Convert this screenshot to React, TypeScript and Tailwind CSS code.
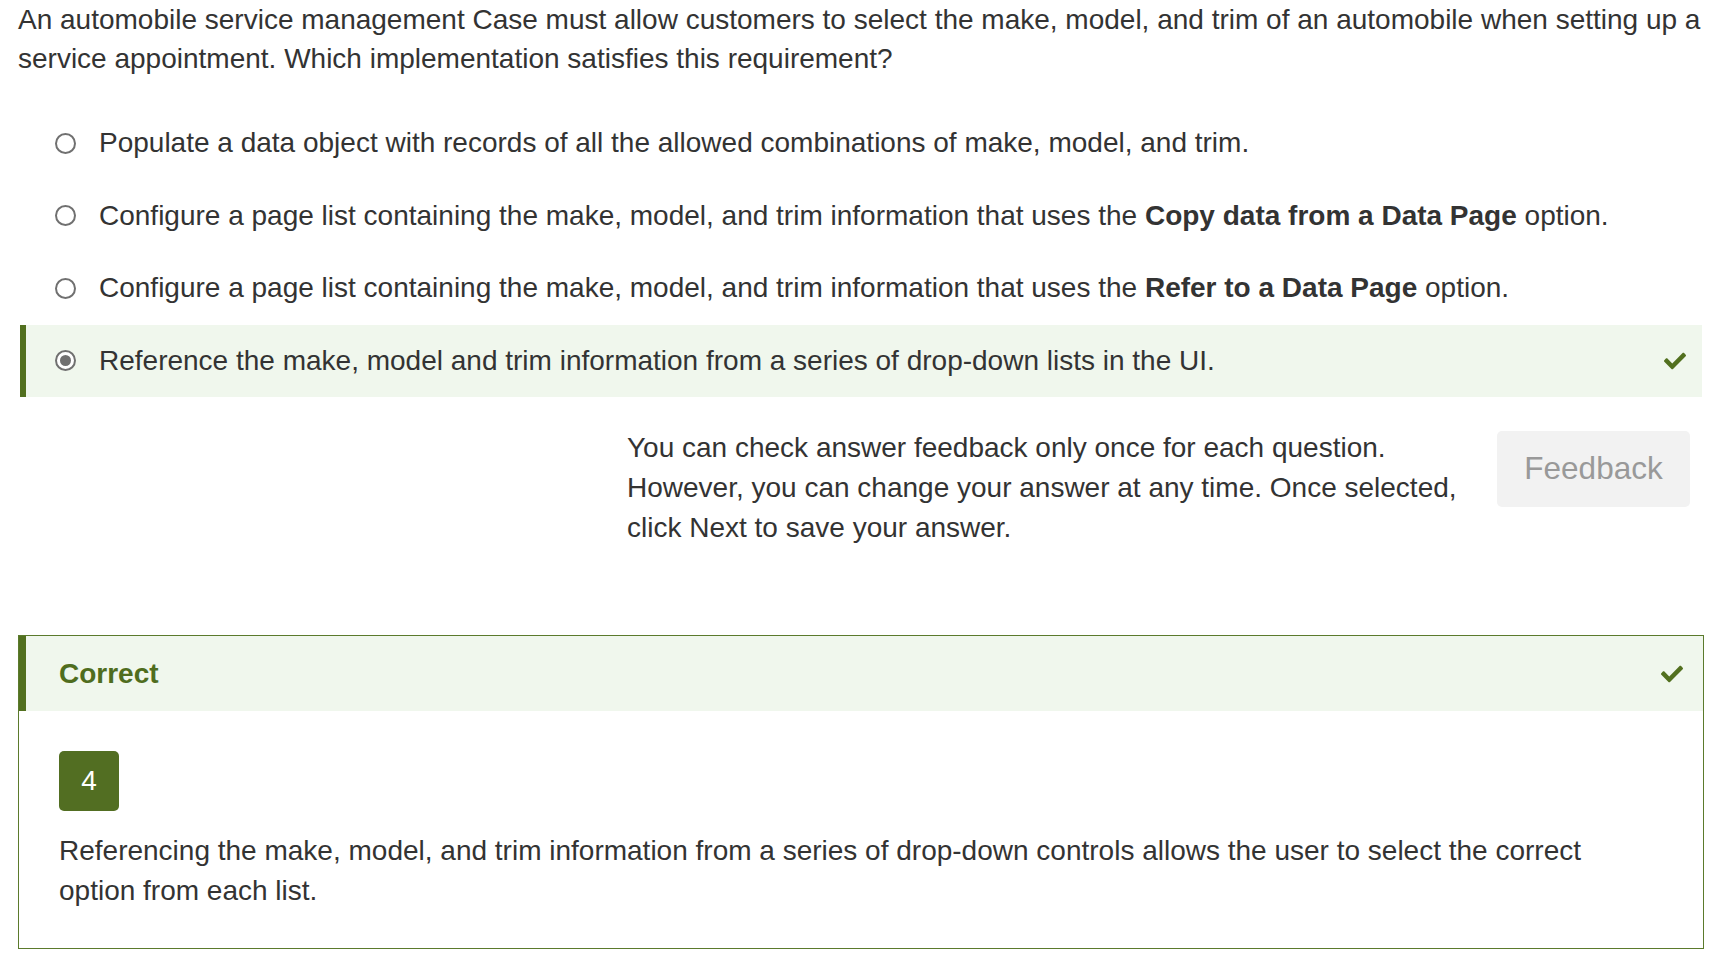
import React from "react";

function Check({ className }: { className?: string }) {
  return (
    <svg viewBox="0 0 512 512" className={className} fill="currentColor" aria-hidden="true">
      <path d="M173.898 439.404l-166.4-166.4c-9.997-9.997-9.997-26.206 0-36.204l36.203-36.204c9.997-9.998 26.207-9.998 36.204 0L192 312.69 432.095 72.596c9.997-9.997 26.207-9.997 36.204 0l36.203 36.204c9.997 9.997 9.997 26.206 0 36.204l-294.4 294.401c-9.998 9.997-26.207 9.997-36.204-.001z" />
    </svg>
  );
}

function Radio({ checked }: { checked?: boolean }) {
  return (
    <span className="flex h-[21px] w-[21px] shrink-0 items-center justify-center rounded-full border-2 border-[#707070] bg-white">
      {checked && <span className="h-[11px] w-[11px] rounded-full bg-[#707070]" />}
    </span>
  );
}

function Option({ children, selected }: { children: React.ReactNode; selected?: boolean }) {
  return (
    <div
      className={
        selected
          ? "flex h-[72.5px] items-center border-l-[6px] border-[#52701f] bg-[#f0f7ed] pl-[29px] pr-[16px]"
          : "flex h-[72.5px] items-center border-l-[6px] border-transparent pl-[29px] pr-[16px]"
      }
    >
      <Radio checked={selected} />
      <div className="ml-[23px] flex-1 leading-[40px]">{children}</div>
      {selected && <Check className="h-[22px] w-[22px] text-[#52701f]" />}
    </div>
  );
}

export default function App() {
  return (
    <div
      className="min-h-[958px] w-full bg-white text-[28px] text-[#333333]"
      style={{ fontFamily: '"Liberation Sans", Arial, sans-serif' }}
    >
      <p className="pl-[18px] pr-[20px] leading-[39px]">
        An automobile service management Case must allow customers to select the make, model, and trim of an
        automobile when setting up a service appointment. Which implementation satisfies this requirement?
      </p>

      <div className="ml-[20px] mr-[23px] mt-[29px]">
        <Option>Populate a data object with records of all the allowed combinations of make, model, and trim.</Option>
        <Option>
          Configure a page list containing the make, model, and trim information that uses the{" "}
          <b className="font-bold">Copy data from a Data Page</b> option.
        </Option>
        <Option>
          Configure a page list containing the make, model, and trim information that uses the{" "}
          <b className="font-bold">Refer to a Data Page</b> option.
        </Option>
        <Option selected>
          Reference the make, model and trim information from a series of drop-down lists in the UI.
        </Option>

        <div className="mt-[31px] flex items-start justify-end gap-[34px] pr-[12px]">
          <p className="w-[836px] leading-[40px]">
            You can check answer feedback only once for each question. However, you can change your answer at any
            time. Once selected, click Next to save your answer.
          </p>
          <button className="mt-[3px] flex h-[76px] w-[193px] items-center justify-center rounded-[5px] bg-[#f2f2f2] text-[31.5px] text-[#999999]">
            Feedback
          </button>
        </div>
      </div>

      <div className="ml-[18px] mr-[21px] mt-[87px] border border-[#5b7a2c]">
        <div className="flex h-[75px] items-center border-l-[7px] border-[#52701f] bg-[#f0f7ed] pl-[33px] pr-[20px]">
          <span className="flex-1 font-bold leading-[40px] text-[#4f6d1e]">Correct</span>
          <Check className="h-[22px] w-[22px] text-[#52701f]" />
        </div>
        <div className="pb-[37px] pl-[40px] pr-[40px] pt-[40px]">
          <div className="flex h-[60px] w-[60px] items-center justify-center rounded-[5px] bg-[#526e22] text-[28px] text-white">
            4
          </div>
          <p className="mt-[20px] leading-[40px]">
            Referencing the make, model, and trim information from a series of drop-down controls allows the user to
            select the correct option from each list.
          </p>
        </div>
      </div>
    </div>
  );
}
